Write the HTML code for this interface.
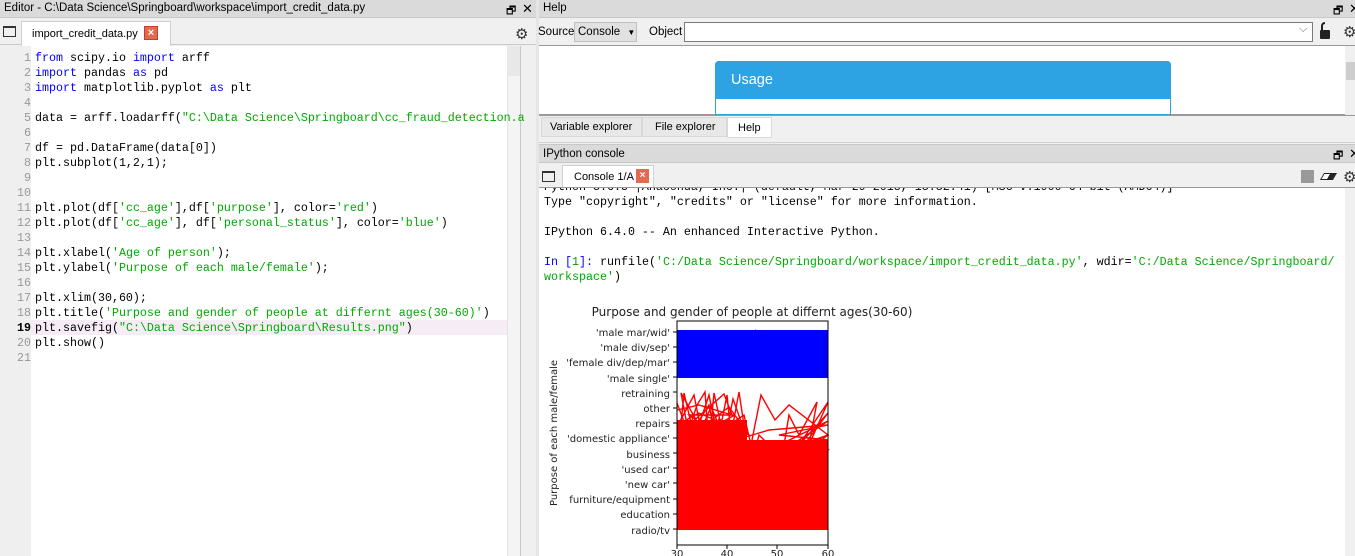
<!DOCTYPE html>
<html><head><meta charset="utf-8"><style>
*{margin:0;padding:0;box-sizing:border-box}
body{width:1355px;height:556px;overflow:hidden;background:#f0f0f0;font-family:"Liberation Sans",sans-serif;font-size:11.5px;color:#000;position:relative}
.a{position:absolute;white-space:nowrap}
.mono{font-family:"Liberation Mono",monospace;font-size:11.67px;line-height:15px;white-space:pre}
.k{color:#0000ff}.s{color:#00aa00}
.tb{background:#dadada;border-bottom:1px solid #c8c8c8;height:18px;font-size:11.5px;padding:2px 4px}
.ln{color:#999;text-align:right;width:31px}
</style></head><body>
<!-- Editor -->
<div class="a tb" style="left:0;top:0;width:536px">Editor - C:\Data Science\Springboard\workspace\import_credit_data.py</div>
<div class="a" style="left:506px;top:2px;font-size:11px">🗗</div>
<div class="a" style="left:522px;top:1px;font-size:13px">✕</div>
<div class="a" style="left:0;top:19px;width:536px;height:26px;background:#f0f0f0;border-bottom:1px solid #c8c8c8"></div>
<div class="a" style="left:3px;top:26px;width:13px;height:11px;border:1.5px solid #333;border-top-width:2px"></div>
<div class="a" style="left:21px;top:21px;width:150px;height:25px;background:#fff;border:1px solid #d0d0d0;border-bottom:none;padding:6px 10px;font-size:11px">import_credit_data.py</div>
<div class="a" style="left:144px;top:26px;width:14px;height:14px;background:#e26a4f;border:1px solid #c04030;color:#fff;font-size:11px;line-height:12px;text-align:center;font-weight:bold">×</div>
<div class="a" style="left:515px;top:25px;font-size:15px;color:#333">⚙</div>
<div class="a" style="left:0;top:46px;width:31px;height:510px;background:#efefef"></div>
<div class="a" style="left:31px;top:46px;width:489px;height:510px;background:#fff"></div>
<div class="a" style="left:507px;top:46px;width:13px;height:510px;background:#f4f4f4;border-left:1px solid #e4e4e4"></div>
<div class="a" style="left:507px;top:46px;width:13px;height:30px;background:#e8e8e8"></div>
<div class="a" style="left:520px;top:46px;width:16px;height:510px;background:#f0f0f0;border-left:1px solid #c8c8c8"></div>
<div class="a" style="left:31px;top:320px;width:476px;height:15px;background:#f6ecf6"></div>
<div class="a mono ln" style="left:0;top:51px">1
2
3
4
5
6
7
8
9
10
11
12
13
14
15
16
17
18
<b style="color:#000">19</b>
20
21</div>
<div class="a mono" style="left:35px;top:51px"><span class="k">from</span> scipy.io <span class="k">import</span> arff
<span class="k">import</span> pandas <span class="k">as</span> pd
<span class="k">import</span> matplotlib.pyplot <span class="k">as</span> plt

data = arff.loadarff(<span class="s">"C:\Data Science\Springboard\cc_fraud_detection.a</span>

df = pd.DataFrame(data[0])
plt.subplot(1,2,1);


plt.plot(df[<span class="s">'cc_age'</span>],df[<span class="s">'purpose'</span>], color=<span class="s">'red'</span>)
plt.plot(df[<span class="s">'cc_age'</span>], df[<span class="s">'personal_status'</span>], color=<span class="s">'blue'</span>)

plt.xlabel(<span class="s">'Age of person'</span>);
plt.ylabel(<span class="s">'Purpose of each male/female'</span>);

plt.xlim(30,60);
plt.title(<span class="s">'Purpose and gender of people at differnt ages(30-60)'</span>)
plt.savefig(<span class="s">"C:\Data Science\Springboard\Results.png"</span>)
plt.show()
</div>
<div class="a" style="left:536px;top:0;width:3px;height:556px;background:#e6e6e6"></div>
<!-- Help -->
<div class="a tb" style="left:539px;top:0;width:816px">Help</div>
<div class="a" style="left:1333px;top:2px;font-size:11px">🗗</div>
<div class="a" style="left:1349px;top:1px;font-size:13px">✕</div>
<div class="a" style="left:538px;top:26px;font-size:11.5px">Source</div>
<div class="a" style="left:574px;top:22px;width:63px;height:20px;background:#e1e1e1;border:1px solid #c0c0c0;padding:3px 3px;font-size:11.5px">Console <span style="font-size:8px;margin-left:4px">▼</span></div>
<div class="a" style="left:649px;top:26px">Object</div>
<div class="a" style="left:684px;top:22px;width:629px;height:20px;background:#fff;border:1px solid #7a7a7a"></div>
<div class="a" style="left:1299px;top:23px;color:#666;font-size:11px">⌵</div>
<div class="a" style="left:1320px;top:30px;width:10px;height:9px;background:#222;border-radius:1px"></div>
<div class="a" style="left:1321px;top:22px;width:8px;height:10px;border:2px solid #222;border-bottom:none;border-radius:4px 4px 0 0;clip-path:inset(0 50% 0 0)"></div>
<div class="a" style="left:1343px;top:23px;font-size:15px;color:#333">⚙</div>
<div class="a" style="left:539px;top:45px;width:816px;height:71px;background:#fff;border-top:1px solid #999;border-bottom:2px solid #999"></div>
<div class="a" style="left:1345px;top:46px;width:10px;height:69px;background:#f0f0f0"></div>
<div class="a" style="left:1346px;top:62px;width:9px;height:18px;background:#cdcdcd"></div>
<div class="a" style="left:715px;top:61px;width:456px;height:54px;border:1px solid #2ea3e3;border-radius:4px 4px 0 0;background:#fff"></div>
<div class="a" style="left:715px;top:61px;width:456px;height:38px;background:#2ea3e3;border-radius:4px 4px 0 0;color:#fff;font-size:14.5px;padding:11px 16px">Usage</div>
<div class="a" style="left:539px;top:117px;width:816px;height:26px;background:#f0f0f0;border-bottom:1px solid #d0d0d0"></div>
<div class="a" style="left:541px;top:117px;width:101px;height:20px;background:#e8e8e8;border:1px solid #d8d8d8;padding:3px 8px;font-size:11px">Variable explorer</div>
<div class="a" style="left:642px;top:117px;width:85px;height:20px;background:#e8e8e8;border:1px solid #d8d8d8;padding:3px 12px;font-size:11px">File explorer</div>
<div class="a" style="left:727px;top:117px;width:45px;height:21px;background:#fff;border:1px solid #d8d8d8;padding:4px 10px;font-size:11px">Help</div>
<!-- IPython -->
<div class="a tb" style="left:539px;top:144px;width:816px;border-top:1px solid #c8c8c8;height:19px;padding-top:3px">IPython console</div>
<div class="a" style="left:1333px;top:147px;font-size:11px">🗗</div>
<div class="a" style="left:1349px;top:146px;font-size:13px">✕</div>
<div class="a" style="left:542px;top:171px;width:13px;height:11px;border:1.5px solid #333;border-top-width:2px"></div>
<div class="a" style="left:562px;top:165px;width:92px;height:23px;background:#fff;border:1px solid #d0d0d0;border-bottom:none;padding:5px 11px;font-size:11px">Console 1/A</div>
<div class="a" style="left:636px;top:169px;width:13px;height:14px;background:#e26a4f;color:#fff;font-size:10px;line-height:13px;text-align:center;font-weight:bold">×</div>
<div class="a" style="left:1301px;top:170px;width:13px;height:13px;background:#999"></div>
<div class="a" style="left:1322px;top:173px;width:13px;height:7px;border:1.5px solid #222;background:linear-gradient(90deg,#fff 50%,#222 50%);transform:skewX(-30deg)"></div>
<div class="a" style="left:1343px;top:168px;font-size:15px;color:#333">⚙</div>
<div class="a" style="left:539px;top:187px;width:816px;height:369px;background:#fff;border-top:1px solid #999"></div>
<div class="a" style="left:1345px;top:188px;width:10px;height:368px;background:#f0f0f0"></div>
<div class="a" style="left:539px;top:188px;width:806px;height:7px;overflow:hidden"><div class="mono" style="margin-top:-8px;padding-left:5px">Python 3.6.5 |Anaconda, Inc.| (default, Mar 29 2018, 13:32:41) [MSC v.1900 64 bit (AMD64)]</div></div>
<div class="a mono" style="left:544px;top:195px">Type "copyright", "credits" or "license" for more information.

IPython 6.4.0 -- An enhanced Interactive Python.

<span class="k">In [</span><span style="color:#00a000">1</span><span class="k">]:</span> runfile(<span class="s">'C:/Data Science/Springboard/workspace/import_credit_data.py'</span>, wdir=<span class="s">'C:/Data Science/Springboard/</span>
<span class="s">workspace'</span>)</div>
<!-- plot -->
<svg class="a" style="left:539px;top:295px" width="400" height="261" font-family="DejaVu Sans, sans-serif" font-size="10" fill="#222">
<text x="213" y="21" text-anchor="middle" font-size="12">Purpose and gender of people at differnt ages(30-60)</text>
<rect x="138" y="35" width="151" height="48" fill="#00f"/>
<polyline fill="none" stroke="#00f" stroke-width="1.3" points="216,35 225,40 236,37 226,45 248,40 270,47 289,36 270,52 289,42 260,57"/>
<rect x="138" y="145" width="151" height="90" fill="#f00"/>
<rect x="138" y="125" width="70" height="25" fill="#f00"/>
<g fill="none" stroke="#f00" stroke-width="1.4">
<polyline points="138,170 145,98 152,128 158,110 166,97 170,150 175,98 182,130 188,100 192,140 200,97 208,150 215,160 220,140 230,150 240,180 250,120 260,140 278,107 270,150 289,107 260,150 289,118 250,170 289,140 230,165 289,126 210,165 150,130 185,99 193,120 160,110 138,115"/>
<polyline points="138,160 170,110 175,135 180,124 190,130 205,120 212,150 222,100 236,125 250,110 289,140 260,150 289,155 250,175 289,165"/>
<polyline points="138,108 150,140 142,98 160,130 170,100 178,140 150,120 196,120 140,150 190,112 210,140 160,118 138,130 200,128 140,140"/>
<polyline points="140,128 155,100 162,135 172,112 186,144 194,104 204,132 180,150 230,135 289,130 240,140 289,145"/>
</g>
<rect x="138" y="26" width="151" height="224" fill="none" stroke="#000" stroke-width="1"/>
<g stroke="#000">
<line x1="134" y1="37" x2="138" y2="37"/><line x1="134" y1="52" x2="138" y2="52"/><line x1="134" y1="67" x2="138" y2="67"/><line x1="134" y1="82" x2="138" y2="82"/><line x1="134" y1="97" x2="138" y2="97"/><line x1="134" y1="113" x2="138" y2="113"/><line x1="134" y1="128" x2="138" y2="128"/><line x1="134" y1="143" x2="138" y2="143"/><line x1="134" y1="158" x2="138" y2="158"/><line x1="134" y1="173" x2="138" y2="173"/><line x1="134" y1="188" x2="138" y2="188"/><line x1="134" y1="204" x2="138" y2="204"/><line x1="134" y1="219" x2="138" y2="219"/><line x1="134" y1="234" x2="138" y2="234"/>
<line x1="138" y1="250" x2="138" y2="254"/><line x1="188" y1="250" x2="188" y2="254"/><line x1="238" y1="250" x2="238" y2="254"/><line x1="289" y1="250" x2="289" y2="254"/>
</g>
<g text-anchor="end">
<text x="131" y="41">'male mar/wid'</text><text x="131" y="56">'male div/sep'</text><text x="131" y="71">'female div/dep/mar'</text><text x="131" y="87">'male single'</text><text x="131" y="102">retraining</text><text x="131" y="117">other</text><text x="131" y="132">repairs</text><text x="131" y="147">'domestic appliance'</text><text x="131" y="163">business</text><text x="131" y="178">'used car'</text><text x="131" y="193">'new car'</text><text x="131" y="208">furniture/equipment</text><text x="131" y="223">education</text><text x="131" y="239">radio/tv</text>
</g>
<g text-anchor="middle"><text x="138" y="262">30</text><text x="188" y="262">40</text><text x="238" y="262">50</text><text x="289" y="262">60</text></g>
<text transform="translate(18,138) rotate(-90)" text-anchor="middle">Purpose of each male/female</text>
</svg>
</body></html>
